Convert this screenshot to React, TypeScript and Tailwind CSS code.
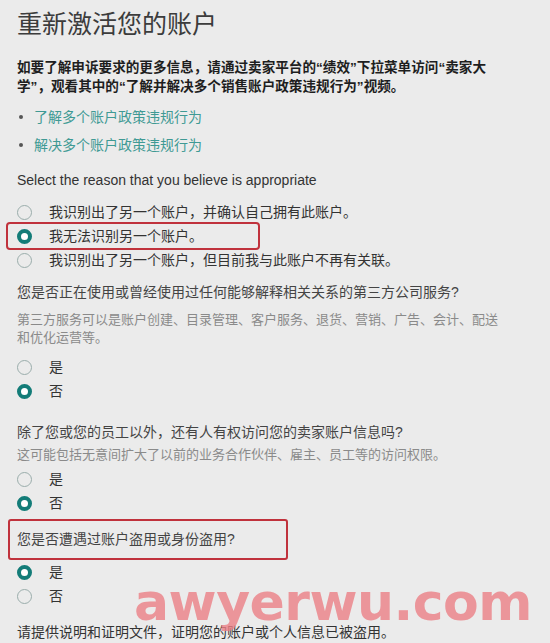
import React from "react";

const font = { fontFamily: '"Liberation Sans", "Noto Sans CJK SC", sans-serif' };

const Radio = ({ checked }: { checked?: boolean }) =>
  checked ? (
    <span className="w-[15px] h-[15px] rounded-full border-[4px] border-[#137c78] bg-white shrink-0" />
  ) : (
    <span className="w-[15px] h-[15px] rounded-full border-[1.5px] border-[#9aadab] shrink-0" />
  );

const Option = ({ label, checked }: { label: string; checked?: boolean }) => (
  <div className="flex items-center h-6 gap-[17px] text-[14px] text-[#333]">
    <Radio checked={checked} />
    <span>{label}</span>
  </div>
);

export default function App() {
  return (
    <div
      className="relative w-[550px] h-[643px] overflow-hidden bg-[#ebebeb] px-[17px] pt-[8px]"
      style={font}
    >
      <h1 className="text-[25px] leading-[32px] text-[#3c3c3c] font-normal">重新激活您的账户</h1>

      <p className="mt-[18px] text-[13.6px] leading-[19px] font-bold text-[#1e1e1e] pr-[20px]">
        如要了解申诉要求的更多信息，请通过卖家平台的“绩效”下拉菜单访问“卖家大学”，观看其中的“了解并解决多个销售账户政策违规行为”视频。
      </p>

      <ul className="mt-[11px] space-y-2">
        {["了解多个账户政策违规行为", "解决多个账户政策违规行为"].map((t) => (
          <li key={t} className="flex items-center h-5 text-[14px] text-[#3f9a94]">
            <span className="w-[4px] h-[4px] rounded-full bg-[#555] ml-[2px] mr-[11px]" />
            {t}
          </li>
        ))}
      </ul>

      <p className="mt-[15px] text-[14px] leading-5 text-[#333]">
        Select the reason that you believe is appropriate
      </p>

      <div className="mt-[10px]">
        <Option label="我识别出了另一个账户，并确认自己拥有此账户。" />
        <div className="-ml-[9px] pl-[9px] w-[250px] outline-2 outline-[#c0323c] rounded-[2px]">
          <Option label="我无法识别另一个账户。" checked />
        </div>
        <Option label="我识别出了另一个账户，但目前我与此账户不再有关联。" />
      </div>

      <p className="mt-[10px] text-[14px] leading-5 text-[#444]">
        您是否正在使用或曾经使用过任何能够解释相关关系的第三方公司服务?
      </p>
      <p className="mt-[9px] text-[13px] leading-[18px] text-[#8a8a8a] pr-[30px]">
        第三方服务可以是账户创建、目录管理、客户服务、退货、营销、广告、会计、配送和优化运营等。
      </p>
      <div className="mt-[8px]">
        <Option label="是" />
        <Option label="否" checked />
      </div>

      <p className="mt-[19px] text-[14px] leading-5 text-[#444]">
        除了您或您的员工以外，还有人有权访问您的卖家账户信息吗?
      </p>
      <p className="mt-[4px] text-[13px] leading-[18px] text-[#8a8a8a]">
        这可能包括无意间扩大了以前的业务合作伙伴、雇主、员工等的访问权限。
      </p>
      <div className="mt-[3px]">
        <Option label="是" />
        <Option label="否" checked />
      </div>

      <div className="mt-[4px] -ml-[9px] pl-[7px] w-[280px] h-[41px] flex items-center border-2 border-[#c0323c] rounded-[3px] text-[14px] text-[#444]">
        您是否遭遇过账户盗用或身份盗用?
      </div>
      <div>
        <Option label="是" checked />
        <Option label="否" />
      </div>

      <p className="mt-[14px] text-[14px] leading-5 text-[#333]">
        请提供说明和证明文件，证明您的账户或个人信息已被盗用。
      </p>

      <div
        className="absolute left-[134px] top-[576px] text-[52px] leading-none font-bold text-[#ec8086] opacity-80 tracking-[-0.5px]"
        style={{ fontFamily: '"DejaVu Sans", sans-serif' }}
      >
        awyerwu.com
      </div>
    </div>
  );
}
